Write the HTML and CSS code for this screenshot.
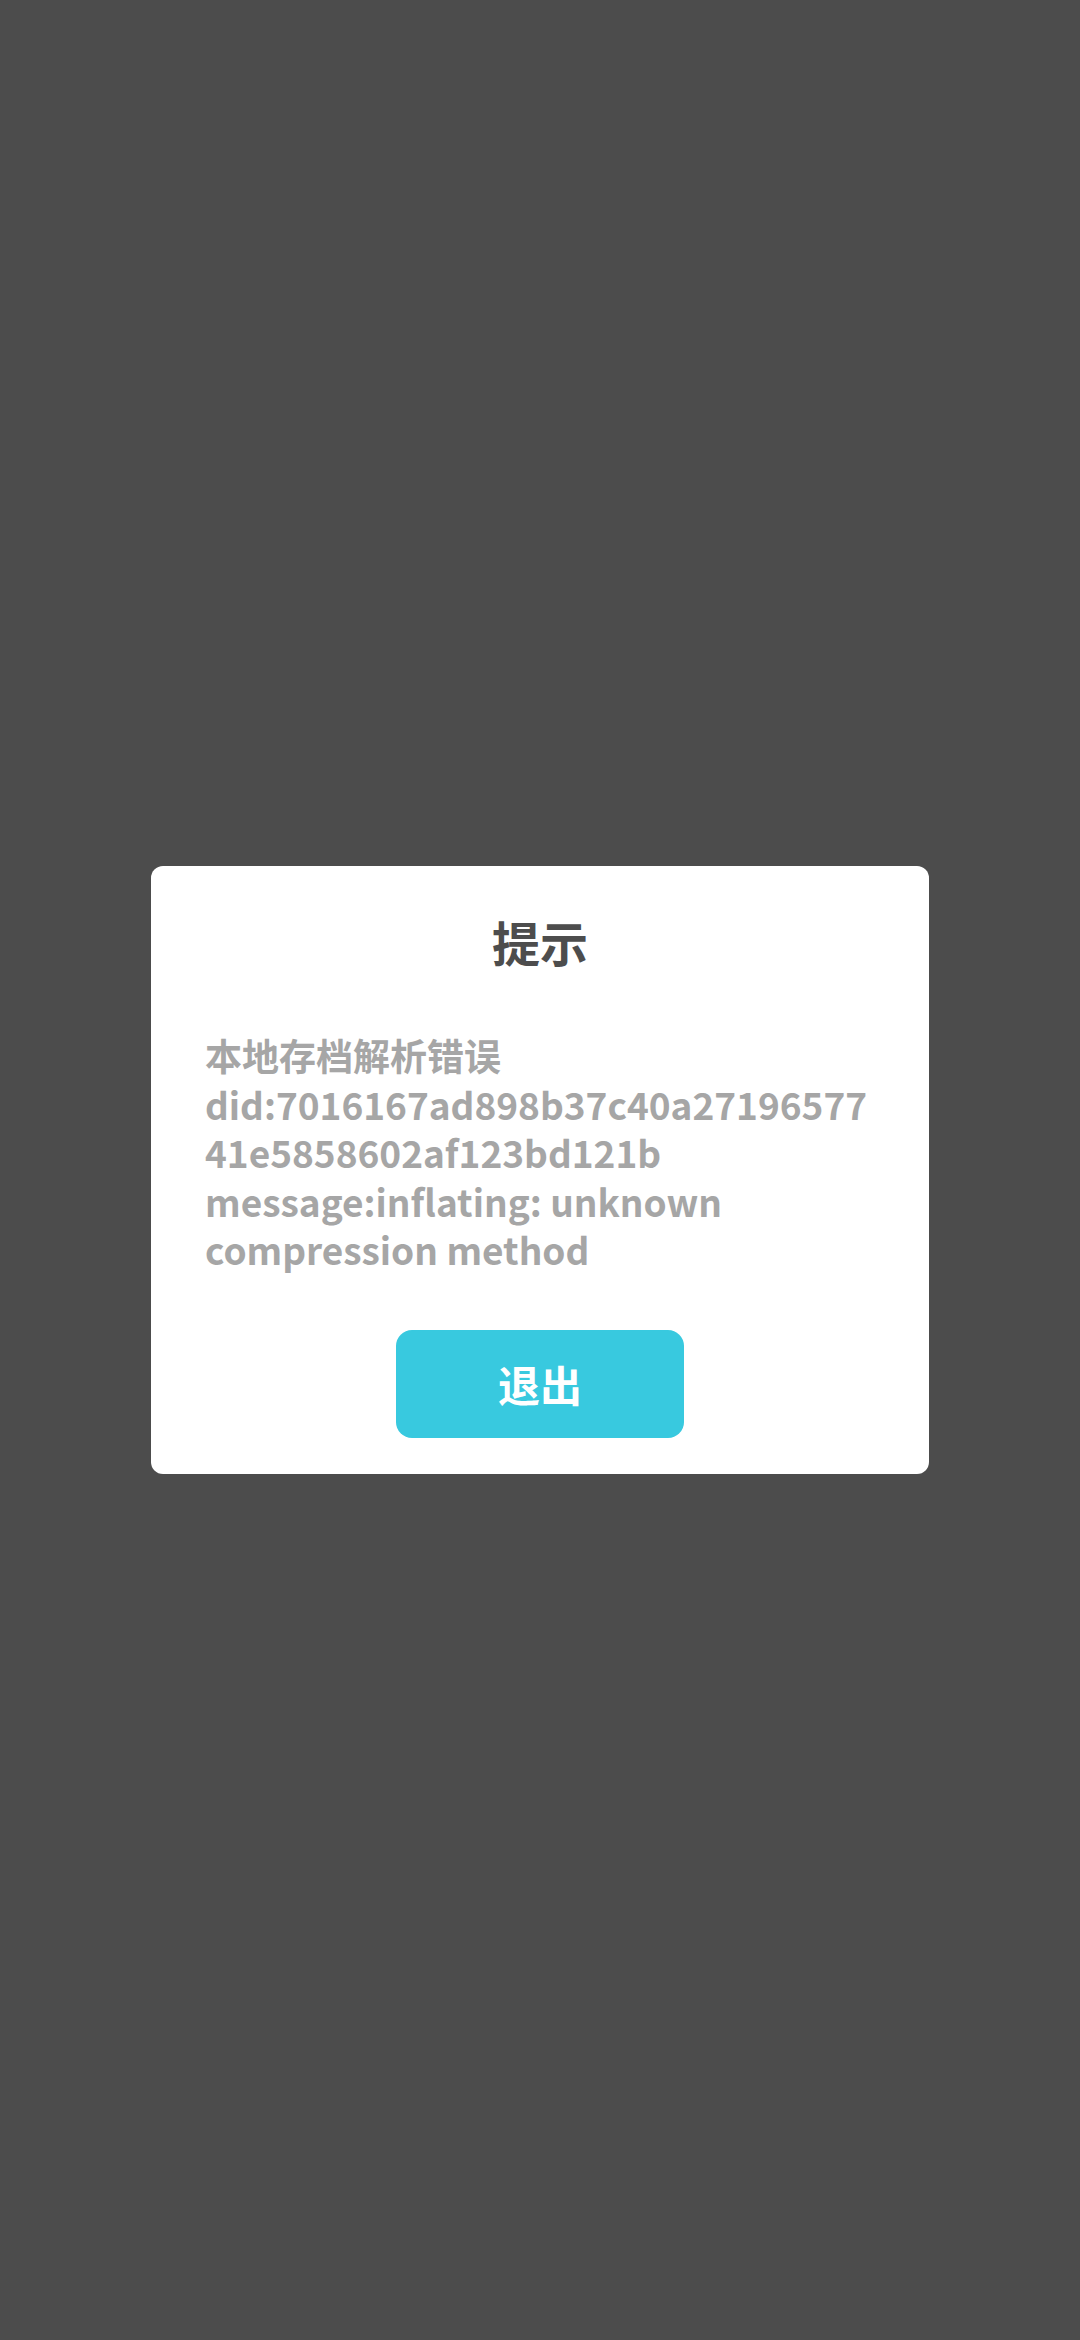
FILE: index.html
```html
<!DOCTYPE html>
<html lang="zh-CN">
<head>
<meta charset="utf-8">
<meta name="viewport" content="width=1080">
<title>提示</title>
<link rel="stylesheet" href="styles.css">
</head>
<body>
<div class="overlay">
  <div class="dialog">
    <div class="title">提示</div>
    <div class="message">本地存档解析错误<br>did:7016167ad898b37c40a27196577<br>41e5858602af123bd121b<br>message:inflating: unknown<br>compression method</div>
    <div class="actions">
      <button class="btn">退出</button>
    </div>
  </div>
</div>
</body>
</html>
```

FILE: styles.css
```css
html, body {
  margin: 0;
  padding: 0;
  background: #4c4c4c;
}
body {
  font-family: "Noto Sans CJK SC", "Noto Sans", sans-serif;
}
.overlay {
  width: 1080px;
  height: 2340px;
  display: flex;
  align-items: center;
  justify-content: center;
}
.dialog {
  width: 778px;
  box-sizing: border-box;
  background: #ffffff;
  border-radius: 12px;
  padding: 45px 54px 36px;
  display: flex;
  flex-direction: column;
}
.title {
  font-size: 48px;
  line-height: 60px;
  font-weight: 700;
  color: #4d4d4d;
  text-align: center;
}
.message {
  margin-top: 60px;
  font-size: 37px;
  line-height: 48.5px;
  font-weight: 700;
  color: #a6a6a6;
  text-align: left;
}
.actions {
  margin-top: 56px;
  display: flex;
  justify-content: center;
}
.btn {
  width: 288px;
  height: 108px;
  border: none;
  border-radius: 16px;
  background: #38c9df;
  color: #ffffff;
  font-family: "Noto Sans CJK SC", "Noto Sans", sans-serif;
  font-size: 42px;
  font-weight: 700;
  padding: 0;
}
```
